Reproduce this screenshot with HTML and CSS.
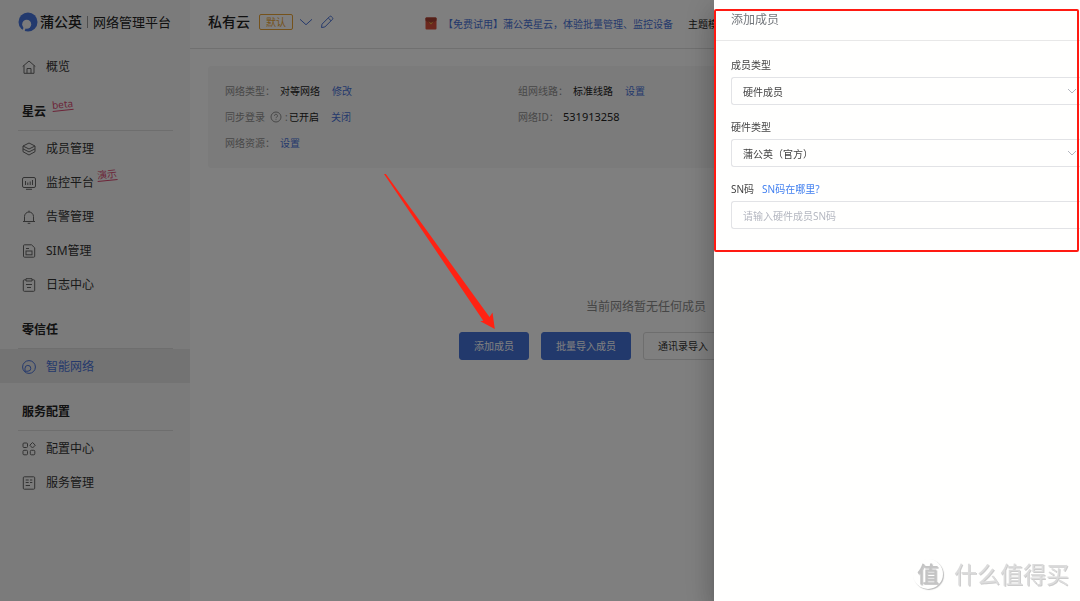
FILE: index.html
```html
<!DOCTYPE html>
<html lang="zh-CN">
<head>
<meta charset="utf-8">
<meta name="viewport" content="width=device-width, initial-scale=1">
<title>蒲公英 网络管理平台</title>
<link rel="stylesheet" href="styles.css">
</head>
<body>
<div class="app">
  <aside class="sidebar">
    <div class="brand">
      <svg class="brand-logo" viewBox="0 0 20 20" aria-hidden="true"><circle cx="10" cy="10" r="9.500" fill="#4674dc"/><circle cx="8.700" cy="12.300" r="4.500" fill="#f7f7f7"/><path d="M7 14.500L5.200 20" stroke="#f7f7f7" stroke-width="2.200"/></svg>
      <span class="brand-name">蒲公英</span>
      <span class="brand-sub">网络管理平台</span>
    </div>
    <nav class="nav">
      <a class="nav-item" href="#"><svg class="icon" viewBox="0 0 14 14"><path d="M.7 6.500 7 1l6.300 5.500M2 5.500v7.800h10V5.500M5 13.300V8.500h4v4.800"/></svg>概览</a>
      <h2 class="nav-title">星云<span class="tag">beta</span></h2>
      <a class="nav-item" href="#"><svg class="icon" viewBox="0 0 14 14"><path d="M7 1l6 3-6 3-6-3zM1 6.900l6 3 6-3M1 4v5.700l6 3.300 6-3.300V4"/></svg>成员管理</a>
      <a class="nav-item" href="#"><svg class="icon" viewBox="0 0 14 14"><rect x=".5" y="1.500" width="13" height="10" rx="1.500"/><path d="M3.500 5v4M5.800 6.500V9M8.200 5.500V9M10.500 4v5M4 13.300h6"/></svg>监控平台<span class="tag">演示</span></a>
      <a class="nav-item" href="#"><svg class="icon" viewBox="0 0 14 14"><path d="M2.500 11.300V6.500a4.500 4.500 0 0 1 9 0v4.800M1 11.500h12M5.700 13.300h2.600M7 2V.6"/></svg>告警管理</a>
      <a class="nav-item" href="#"><svg class="icon" viewBox="0 0 14 14"><path d="M2.500.8h7l3.200 3v8.400q0 1-1 1H2.500q-1 0-1-1V1.800q0-1 1-1zM4 4.500h3"/><rect x="4" y="7" width="6" height="3.800"/></svg>SIM管理</a>
      <a class="nav-item" href="#"><svg class="icon" viewBox="0 0 14 14"><path d="M4 1.800H2.300q-1 0-1 1v9.500q0 1 1 1h9.400q1 0 1-1V2.800q0-1-1-1H10M4 .7h6v2.300H4zM4 6.500h6M5 9.500h4"/></svg>日志中心</a>
      <h2 class="nav-title">零信任</h2>
      <a class="nav-item active" href="#"><svg class="icon" viewBox="0 0 14 14"><circle cx="7" cy="7" r="6.400"/><path d="M3 12V8.300A2.900 2.900 0 1 1 6 11.200H3.200"/></svg>智能网络</a>
      <h2 class="nav-title">服务配置</h2>
      <a class="nav-item" href="#"><svg class="icon" viewBox="0 0 14 14"><rect x="1" y="1" width="4.500" height="4.500" rx="1"/><path d="M10.500.5l2.800 2.700-2.800 2.800-2.700-2.800z"/><rect x="1" y="8.300" width="4.500" height="4.500" rx="1"/><rect x="8.300" y="8.300" width="4.500" height="4.500" rx="1"/></svg>配置中心</a>
      <a class="nav-item" href="#"><svg class="icon" viewBox="0 0 14 14"><rect x="1.300" y=".8" width="11.400" height="12.400" rx="1"/><path d="M3.700 4h3M8 4h2.300M3.700 6.500h3M8 6.500h2.300M3.700 9.500h4.300"/></svg>服务管理</a>
    </nav>
  </aside>

  <main class="main">
    <header class="topbar">
      <h1 class="net-name">私有云</h1>
      <span class="badge">默认</span>
      <button class="icon-btn" type="button" aria-label="切换网络"><svg class="icon" viewBox="0 0 14 14"><path d="M1 4.300l6 5.400 6-5.400"/></svg></button>
      <button class="icon-btn" type="button" aria-label="编辑"><svg class="icon" viewBox="0 0 14 14"><path d="M1.500 12.500l.5-3.300L9.700 1.500q.8-.7 1.600 0l1.200 1.200q.7.800 0 1.600L4.800 12zM8.300 3l2.700 2.700"/></svg></button>
      <a class="promo" href="#"><svg class="promo-icon" viewBox="0 0 12 13"><rect x=".5" y=".5" width="11" height="12" rx="1" fill="#d8503c"/><path d="M.5 1.500v2L6 7l5.500-3.500v-2q0-1-1-1h-9q-1 0-1 1z" fill="#a84032"/><path d="M3.200 4.300L6 6l2.800-1.700L6 7.500z" fill="#f5c04a"/></svg>【免费试用】蒲公英星云，体验批量管理、监控设备</a>
      <span class="theme">主题模</span>
    </header>

    <section class="info">
      <div class="info-col">
        <p class="info-row"><span class="key">网络类型：</span><span>对等网络</span><a href="#">修改</a></p>
        <p class="info-row"><span class="key with-help">同步登录<svg class="help" viewBox="0 0 12 12"><circle cx="6" cy="6" r="5"/><path d="M4.500 4.800a1.500 1.500 0 1 1 2.200 1.300Q6 6.500 6 7.200M6 8.300v.8"/></svg>:</span><span>已开启</span><a href="#">关闭</a></p>
        <p class="info-row"><span class="key">网络资源：</span><a class="first" href="#">设置</a></p>
      </div>
      <div class="info-col">
        <p class="info-row"><span class="key">组网线路：</span><span>标准线路</span><a href="#">设置</a></p>
        <p class="info-row"><span class="key id-key">网络ID：</span><span class="num">531913258</span></p>
      </div>
    </section>

    <section class="empty">
      <p class="empty-text">当前网络暂无任何成员</p>
      <div class="actions">
        <button class="btn primary" type="button">添加成员</button>
        <button class="btn primary" type="button">批量导入成员</button>
        <button class="btn" type="button">通讯录导入</button>
      </div>
    </section>
  </main>
</div>

<div class="mask"></div>

<section class="drawer" role="dialog" aria-labelledby="drawer-title">
  <h2 class="drawer-title" id="drawer-title">添加成员</h2>
  <form class="form">
    <div class="field">
      <label class="label" for="member-type">成员类型</label>
      <div class="control">
        <select class="input" id="member-type"><option>硬件成员</option></select>
        <svg class="caret" viewBox="0 0 10 10"><path d="M1 3l4 4 4-4"/></svg>
      </div>
    </div>
    <div class="field">
      <label class="label" for="hw-type">硬件类型</label>
      <div class="control">
        <select class="input" id="hw-type"><option>蒲公英（官方）</option></select>
        <svg class="caret" viewBox="0 0 10 10"><path d="M1 3l4 4 4-4"/></svg>
      </div>
    </div>
    <div class="field">
      <div class="label"><label for="sn">SN码</label><a class="sn-link" href="#">SN码在哪里?</a></div>
      <input class="input" id="sn" type="text" placeholder="请输入硬件成员SN码">
    </div>
  </form>
  <div class="highlight"></div>
  <div class="watermark"><span class="seal">值</span>什么值得买</div>
</section>

<svg class="arrow" viewBox="0 0 112 156" aria-hidden="true"><path fill="#ff2213" d="M0 0l1.500-.5L105.500 143l3-4.500 2.300 16.500-14.500-7.800 3-.5z"/></svg>
</body>
</html>
```

FILE: styles.css
```css
* {
  box-sizing: border-box;
}

body {
  margin: 0;
  background: #fff;
  color: #222;
  font: 10px/20px "Noto Sans", "Noto Sans CJK SC", sans-serif;
  overflow: hidden;
}

h1, h2, p {
  margin: 0;
}

a {
  color: #4a72d8;
  text-decoration: none;
}

button {
  font-family: inherit;
  cursor: pointer;
}

.app {
  display: flex;
  min-height: 100vh;
}

.icon {
  width: 14px;
  height: 14px;
  flex: none;
  fill: none;
  stroke: currentColor;
  stroke-width: 1;
}

/* Sidebar */
.sidebar {
  flex: none;
  width: 190px;
  background: #f7f7f7;
}

.brand {
  display: flex;
  align-items: center;
  height: 49px;
  padding: 0 0 5px 18px;
  white-space: nowrap;
}

.brand-logo {
  width: 20px;
  height: 20px;
  margin-right: 2px;
}

.brand-name {
  padding-right: 5px;
  border-right: 1px solid #999;
  font-size: 14px;
  font-weight: 500;
  line-height: 12px;
}

.brand-sub {
  padding-left: 5px;
  font-size: 13px;
}

.nav-item {
  display: flex;
  align-items: center;
  height: 34px;
  padding: 1px 0 0 22px;
  color: #333;
  font-size: 12px;
}

.nav-item .icon {
  margin-right: 10px;
  color: #666;
}

.nav-item.active {
  background: #e6e6e6;
  color: #4a72d8;
}

.nav-item.active .icon {
  color: inherit;
}

.nav-title {
  display: flex;
  height: 48px;
  margin: 0 17px 0 18px;
  padding: 19px 0 0 4px;
  border-bottom: 1px solid #dcdcdc;
  font-size: 12px;
  font-weight: 700;
  line-height: 20px;
}

.tag {
  align-self: flex-start;
  margin: 2px 0 0 3px;
  border-bottom: 1px solid #d84870;
  color: #d84870;
  font-size: 10px;
  font-weight: 400;
  line-height: 12px;
  transform: rotate(-6deg);
}

.nav-title .tag {
  margin: -4px 0 0 6px;
}

/* Top bar */
.main {
  flex: 1;
  min-width: 0;
}

.topbar {
  display: flex;
  align-items: center;
  height: 49px;
  padding: 0 0 4px 18px;
  border-bottom: 1px solid #e0e0e0;
  white-space: nowrap;
}

.net-name {
  font-size: 14px;
  font-weight: 500;
}

.badge {
  margin: 0 6px 0 9px;
  padding: 0 6px;
  border: 1px solid #eba536;
  border-radius: 2px;
  color: #eba536;
  line-height: 14px;
}

.icon-btn {
  display: flex;
  margin-right: 7px;
  padding: 0;
  border: 0;
  background: none;
  color: #4a72d8;
}

.promo {
  display: flex;
  align-items: center;
  margin-left: 84px;
  padding-top: 3px;
}

.promo-icon {
  width: 12px;
  height: 13px;
  margin-right: 6px;
}

.theme {
  margin-left: 15px;
  padding-top: 3px;
}

/* Network details */
.info {
  display: grid;
  grid-template-columns: 293px 1fr;
  min-height: 100px;
  margin: 17px 0 0 18px;
  padding: 12px 17px;
  border-radius: 3px;
  background: #f7f7f7;
}

.info-row {
  display: flex;
  align-items: center;
  height: 26px;
}

.info-row a {
  margin-left: 12px;
}

.info-row .first {
  margin-left: 0;
}

.key {
  min-width: 55px;
  color: #909090;
}

.with-help {
  display: flex;
  align-items: center;
  min-width: 64px;
}

.id-key {
  min-width: 45px;
}

.help {
  width: 12px;
  height: 12px;
  margin: 0 3px 0 5px;
  fill: none;
  stroke: currentColor;
}

.num {
  font-size: 11px;
}

/* Empty state */
.empty {
  width: 396px;
  margin: 129px auto 0;
  padding-left: 22px;
}

.empty-text {
  color: #8c8c8c;
  font-size: 12px;
  text-align: center;
}

.actions {
  display: flex;
  gap: 12px;
  margin-top: 15px;
}

.btn {
  height: 28px;
  padding: 0 14px 2px;
  border: 1px solid #dcdcdc;
  border-radius: 3px;
  background: #fff;
  color: #333;
  font-size: 10px;
  white-space: nowrap;
}

.btn.primary {
  border-color: #4472d8;
  background: #4472d8;
  color: #fff;
}

.mask {
  position: fixed;
  inset: 0;
  background: rgba(0, 0, 0, 0.5);
}

/* Drawer */
.drawer {
  position: fixed;
  top: 0;
  right: 0;
  bottom: 0;
  width: 366px;
  background: #fffffe;
  box-shadow: 0 8px 10px -5px rgba(0, 0, 0, 0.2), 0 16px 24px 2px rgba(0, 0, 0, 0.14), 0 6px 30px 5px rgba(0, 0, 0, 0.12);
}

.drawer-title {
  height: 41px;
  padding: 10px 0 0 17px;
  border-bottom: 1px solid #e8e8e8;
  color: #72767b;
  font-size: 12px;
  font-weight: 400;
}

.form {
  display: grid;
  gap: 12px;
  padding: 14px 0 0 17px;
}

.field {
  display: grid;
  gap: 2px;
}

.label {
  color: #444;
}

.sn-link {
  margin-left: 8px;
  color: #4381f0;
}

.control {
  position: relative;
}

.input {
  display: block;
  width: 100%;
  height: 28px;
  padding: 1px 11px 0;
  border: 1px solid #e2e3e6;
  border-right: 0;
  border-radius: 3px 0 0 3px;
  background: transparent;
  color: #444;
  font: inherit;
  appearance: none;
}

.input::placeholder {
  color: #b4b7c0;
}

.caret {
  position: absolute;
  top: 9px;
  right: 3px;
  width: 10px;
  height: 10px;
  fill: none;
  stroke: #b4b7c0;
  pointer-events: none;
}

.highlight {
  position: absolute;
  inset: 9px 1px auto 0;
  height: 243px;
  border: 2px solid #ff1a12;
  border-radius: 2px;
  pointer-events: none;
}

.watermark {
  position: absolute;
  right: 11px;
  bottom: 11px;
  display: flex;
  align-items: center;
  gap: 10px;
  color: #dcdcdc;
  font-size: 23px;
  line-height: 32px;
  text-shadow: 1px 1px 0 #ccc;
}

.seal {
  width: 30px;
  height: 30px;
  margin-right: 1px;
  border-radius: 50%;
  box-shadow: 1px 1px 1px #bbb;
  color: #c4c4c4;
  font-size: 22px;
  font-weight: 500;
  line-height: 28px;
  text-align: center;
}

.arrow {
  position: fixed;
  top: 174px;
  left: 384px;
  width: 112px;
  height: 156px;
  pointer-events: none;
}
```
